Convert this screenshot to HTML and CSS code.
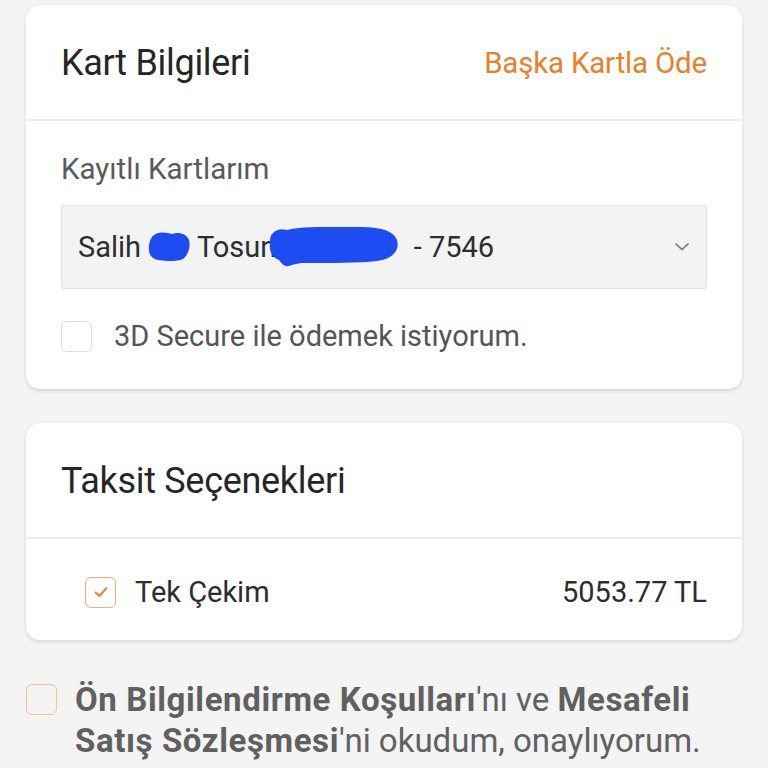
FILE: index.html
```html
<!DOCTYPE html>
<html lang="tr">
<head>
<meta charset="utf-8">
<link rel="stylesheet" href="styles.css">
</head>
<body>
<div class="page">
  <section class="card">
    <div class="card-head">
      <h2 class="card-title">Kart Bilgileri</h2>
      <a class="link">Başka Kartla Öde</a>
    </div>
    <div class="card-body">
      <div class="label">Kayıtlı Kartlarım</div>
      <div class="select">
        <span class="select-text">Salih <svg class="blob blob-a" width="42" height="31" viewBox="0 0 42 31"><path d="M6 4 C12 0 20 2 24 3 C30 1 38 2 41 9 C43 16 40 24 35 28 C28 31 18 30 10 29 C3 28 0 22 1 14 C2 9 3 6 6 4 Z" fill="#1f4cf2"/></svg> Tosun<svg class="blob blob-b" width="130" height="41" viewBox="0 0 130 41"><path d="M3 8 C8 2 14 3 18 4 C30 0 60 1 90 1 C110 1 124 4 128 14 C131 24 124 33 108 35 C90 37 60 37 36 37 C28 37 24 39 20 40 C15 41 12 37 10 34 C4 32 0 26 1 18 C1 13 1 11 3 8 Z" fill="#1f4cf2"/></svg>  - 7546</span>
        <svg class="chev" width="18" height="12" viewBox="0 0 18 12"><path d="M3 3 L9 8.5 L15 3" fill="none" stroke="#8a8a8a" stroke-width="1.8" stroke-linecap="round" stroke-linejoin="round"/></svg>
      </div>
      <div class="check-row">
        <span class="box"></span>
        <span class="check-text">3D Secure ile ödemek istiyorum.</span>
      </div>
    </div>
  </section>

  <section class="card card-2">
    <div class="card-head">
      <h2 class="card-title">Taksit Seçenekleri</h2>
    </div>
    <div class="inst-row">
      <span class="box box-on">
        <svg width="18" height="14" viewBox="0 0 18 14"><path d="M3.5 7.5 L7.5 11 L14.5 3" fill="none" stroke="#e8812a" stroke-width="1.9" stroke-linecap="round" stroke-linejoin="round"/></svg>
      </span>
      <span class="inst-name">Tek Çekim</span>
      <span class="inst-price">5053.77 TL</span>
    </div>
  </section>

  <div class="agree">
    <span class="box box-orange"></span>
    <p class="agree-text"><b>Ön Bilgilendirme Koşulları</b>'nı ve <b>Mesafeli</b> <b>Satış Sözleşmesi</b>'ni okudum, onaylıyorum.</p>
  </div>
</div>
</body>
</html>
```

FILE: styles.css
```css
* { box-sizing: border-box; }
html, body { margin: 0; padding: 0; }
body {
  background: #f4f4f4;
  font-family: Roboto, "Noto Sans", sans-serif;
  width: 768px;
  height: 768px;
  overflow: hidden;
}
.page {
  padding: 5px 26px 0 26px;
  display: flex;
  flex-direction: column;
}
.card {
  background: #fff;
  border-radius: 14px;
  box-shadow: 0 2px 4px rgba(0,0,0,0.12), 0 0 1px rgba(0,0,0,0.08);
}
.card-2 { margin-top: 34px; }
.card-head {
  height: 116px;
  border-bottom: 2px solid #ececec;
  display: flex;
  align-items: center;
  justify-content: space-between;
  padding: 2px 35px 0 35px;
}
.card-title {
  margin: 0;
  font-size: 36px;
  font-weight: 400;
  color: #262626;
  letter-spacing: -0.3px;
}
.link {
  font-size: 29.5px;
  color: #e8812a;
  letter-spacing: -0.2px;
}
.card-body {
  padding: 30px 35px 36px 35px;
}
.label {
  font-size: 29.5px;
  color: #5a5a5a;
  line-height: 36px;
}
.select {
  margin-top: 18px;
  height: 84px;
  background: #f3f3f3;
  border: 1px solid #e2e2e2;
  border-radius: 2px;
  display: flex;
  align-items: center;
  justify-content: space-between;
  padding: 0 15px 0 16px;
}
.select-text {
  font-size: 29px;
  color: #2d2d2d;
  display: flex;
  align-items: center;
  white-space: pre;
}
.blob { display: block; flex: none; }
.blob-a { margin-top: -2px; }
.blob-b { margin-left: -7px; margin-top: -1px; }
.chev { display: block; }
.check-row {
  margin-top: 30px;
  display: flex;
  align-items: center;
  gap: 22px;
}
.box {
  width: 31px;
  height: 31px;
  border: 1.5px solid #dedede;
  border-radius: 6px;
  background: #fff;
  flex: none;
  display: flex;
  align-items: center;
  justify-content: center;
}
.check-text {
  font-size: 29px;
  color: #555;
}
.inst-row {
  height: 101px;
  display: flex;
  align-items: center;
  padding: 5px 35px 0 59px;
}
.box-on { border-color: #e9ad77; }
.inst-name {
  margin-left: 19px;
  font-size: 29px;
  color: #2d2d2d;
  flex: 1;
}
.inst-price {
  font-size: 29px;
  color: #2d2d2d;
}
.agree {
  margin-top: 44px;
  display: flex;
  align-items: flex-start;
  gap: 18px;
}
.box-orange {
  border-color: #f0c39a;
  background: transparent;
}
.agree-text {
  margin: -5px 0 0 0;
  max-width: 665px;
  font-size: 33px;
  line-height: 41px;
  color: #616161;
}
.agree-text b {
  font-weight: 700;
  color: #606060;
  letter-spacing: 0.6px;
}
```
